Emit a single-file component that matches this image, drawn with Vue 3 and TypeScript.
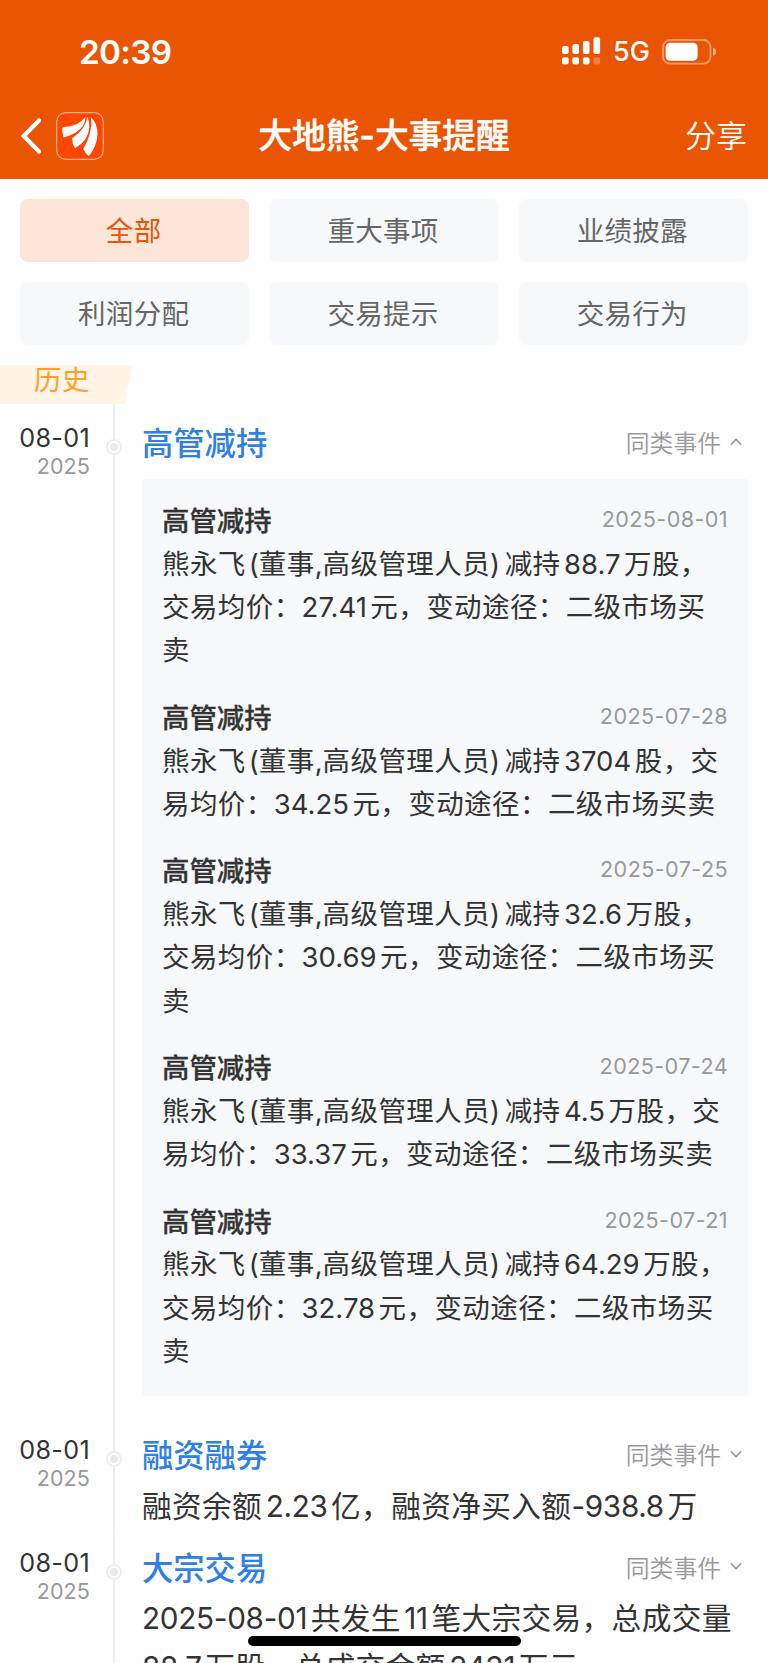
<script setup lang="ts">
interface Run { text: string; kind: string[] }
interface Notice { date: string; lines: string[] }
interface Entry { day: string; year: string; title: string; open: boolean; notices: Notice[]; lines: string[] }

const filters: string[] = ['全部', '重大事项', '业绩披露', '利润分配', '交易提示', '交易行为']

const entries: Entry[] = [
  {
    day: '08-01', year: '2025', title: '高管减持', open: true, lines: [],
    notices: [
      { date: '2025-08-01', lines: ['熊永飞(董事,高级管理人员)减持88.7万股，', '交易均价：27.41元，变动途径：二级市场买', '卖'] },
      { date: '2025-07-28', lines: ['熊永飞(董事,高级管理人员)减持3704股，交', '易均价：34.25元，变动途径：二级市场买卖'] },
      { date: '2025-07-25', lines: ['熊永飞(董事,高级管理人员)减持32.6万股，', '交易均价：30.69元，变动途径：二级市场买', '卖'] },
      { date: '2025-07-24', lines: ['熊永飞(董事,高级管理人员)减持4.5万股，交', '易均价：33.37元，变动途径：二级市场买卖'] },
      { date: '2025-07-21', lines: ['熊永飞(董事,高级管理人员)减持64.29万股，', '交易均价：32.78元，变动途径：二级市场买', '卖'] },
    ],
  },
  { day: '08-01', year: '2025', title: '融资融券', open: false, notices: [], lines: ['融资余额2.23亿，融资净买入额-938.8万'] },
  { day: '08-01', year: '2025', title: '大宗交易', open: false, notices: [], lines: ['2025-08-01共发生11笔大宗交易，总成交量', '88.7万股，总成交金额2431万元'] },
]

// Splits a line so that figures and brackets can carry a little space beside Chinese characters.
function runs(line: string): Run[] {
  const parts = line.match(/[-\d.]+|\(|\)|,|[^-\d.(),]+/g) ?? []
  return parts.map((text, i): Run => {
    if (/\d/.test(text)) {
      const flush = i === 0 || text.startsWith('-') || parts[i - 1].endsWith('：')
      return { text, kind: flush ? ['num', 'flush'] : ['num'] }
    }
    if (text === '(') return { text, kind: ['open'] }
    if (text === ')') return { text, kind: ['close'] }
    if (text === ',') return { text, kind: [] }
    return { text, kind: ['cjk'] }
  })
}
</script>

<template>
  <div class="page">
    <header class="top">
      <div class="status">
        <span class="clock">20:39</span>
        <div class="indicators">
          <svg class="signal" width="40" height="30" viewBox="0 0 40 30" fill="#fff">
            <rect x="0" y="9" width="6.6" height="8" rx="2" />
            <rect x="10.4" y="7" width="6.6" height="10" rx="2" />
            <rect x="20.9" y="4" width="6.6" height="13" rx="2" />
            <rect x="31.5" y="0.3" width="6.6" height="16.7" rx="2" />
            <rect x="0" y="20.3" width="6.6" height="7.3" rx="2" />
            <rect x="10.4" y="20.3" width="6.6" height="7.3" rx="2" />
            <rect x="20.9" y="20.3" width="6.6" height="7.3" rx="2" />
            <rect x="31.5" y="20.3" width="6.6" height="7.3" rx="2" opacity=".25" />
          </svg>
          <span class="network">5G</span>
          <svg class="battery" width="55" height="26" viewBox="0 0 55 26">
            <rect x="1" y="1" width="47.5" height="23.6" rx="7" fill="none" stroke="#fff" stroke-opacity=".42" stroke-width="1.8" />
            <rect x="3.6" y="3.8" width="32" height="18" rx="4.5" fill="#fff" />
            <path d="M51 8.5q3 1.2 3 4.3t-3 4.3z" fill="#fff" fill-opacity=".5" />
          </svg>
        </div>
      </div>
      <div class="nav">
        <div class="nav-left">
          <svg class="back" width="22" height="36" viewBox="0 0 22 36" fill="none" stroke="#fff" stroke-width="4.2" stroke-linecap="round" stroke-linejoin="miter">
            <path d="M18 2.500 2.800 18 18 33.500" />
          </svg>
          <svg class="logo" width="48" height="48" viewBox="0 0 48 48">
            <rect x=".7" y=".7" width="46.600" height="46.600" rx="9" fill="#ff4600" stroke="#ffb38c" stroke-width="1.200" />
            <g fill="#fff">
              <path d="M6.500 15.200 Q23 14.500 29.300 5 Q30 14 19 21 Q13 24 7.500 25.600 Q5.600 20 6.500 15.200Z" />
              <path d="M31.300 4.500 Q30.800 15.500 16 26.500 Q16.200 32 19 36.300 Q32 29 33.300 16 Q33.500 9 31.300 4.500Z" />
              <path d="M34.700 5 Q37.500 18 27.300 37 Q29 41 32.800 44.300 Q41 34 41.500 22 Q41.500 11 34.700 5Z" />
            </g>
          </svg>
        </div>
        <h1>大地熊-大事提醒</h1>
        <span class="share">分享</span>
      </div>
    </header>

    <nav class="filters">
      <span v-for="(f, i) in filters" :key="f" class="filter" :class="{ active: i === 0 }">{{ f }}</span>
    </nav>

    <div class="history"><span>历史</span></div>

    <main class="timeline">
      <section v-for="e in entries" :key="e.title" class="entry">
        <div class="when">
          <span class="day">{{ e.day }}</span>
          <span class="year">{{ e.year }}</span>
        </div>
        <div class="rail"><i class="dot"></i></div>
        <div class="content">
          <div class="head">
            <h2>{{ e.title }}</h2>
            <span class="similar">
              同类事件
              <svg width="12" height="8" viewBox="0 0 12 8" fill="none" stroke="#999" stroke-width="1.700">
                <path :d="e.open ? 'M1 6.500 6 1.500l5 5' : 'M1 1.500l5 5 5-5'" />
              </svg>
            </span>
          </div>
          <div v-if="e.open" class="box">
            <article v-for="n in e.notices" :key="n.date" class="notice">
              <div class="notice-head"><h3>{{ e.title }}</h3><time>{{ n.date }}</time></div>
              <p v-for="l in n.lines" :key="l" class="line"><span v-for="(r, i) in runs(l)" :key="i" :class="r.kind">{{ r.text }}</span></p>
            </article>
          </div>
          <div v-else class="summary">
            <p v-for="l in e.lines" :key="l" class="line"><span v-for="(r, i) in runs(l)" :key="i" :class="r.kind">{{ r.text }}</span></p>
          </div>
        </div>
      </section>
    </main>
    <div class="home-bar"></div>
  </div>
</template>

<style>
body { margin: 0; background: #fefefe; }
</style>

<style scoped>
.page {
  position: relative;
  width: 768px;
  height: 1663px;
  overflow: hidden;
  display: flex;
  flex-direction: column;
  background: #fefefe;
  color: #333;
  font-family: Inter, "Noto Sans CJK SC", sans-serif;
  text-autospace: no-autospace;
  text-spacing-trim: space-all;
}
h1, h2, h3, p { margin: 0; }
.top { flex: none; height: 179px; background: #ea5504; color: #fff; }
.status { height: 93px; padding: 9px 51px 0 79px; display: flex; align-items: center; justify-content: space-between; box-sizing: border-box; }
.clock { font-size: 33.300px; font-weight: 600; letter-spacing: -0.700px; line-height: 40px; padding-top: 2px; }
.indicators { display: flex; align-items: center; padding-top: 1px; }
.signal { margin-right: 11px; }
.network { font-size: 27px; font-weight: 500; line-height: 30px; width: 37px; margin-right: 12px; padding-top: 1px; white-space: nowrap; }
.nav { height: 86px; padding: 0 21px; display: grid; grid-template-columns: 1fr auto 1fr; align-items: center; }
.nav-left { display: flex; align-items: center; }
.back { margin-right: 13px; }
h1 { font-size: 33.700px; font-weight: 500; line-height: 48px; white-space: nowrap; -webkit-text-stroke: 0.500px #fff; }
.share { justify-self: end; font-size: 31px; line-height: 44px; font-weight: 350; }

.filters { flex: none; display: grid; grid-template-columns: repeat(3, 1fr); grid-auto-rows: 63px; gap: 20px; padding: 20px 20px 0; }
.filter { display: flex; align-items: center; justify-content: center; box-sizing: border-box; padding: 0 2px 3px 0; border-radius: 8px; background: #f6f8fa; color: #666; font-size: 27.500px; letter-spacing: 0.300px; }
.filter.active { background: #fce6da; color: #ea5504; }

.history { flex: none; width: 132px; height: 39px; margin-top: 20px; background: #fff4e6; clip-path: polygon(0 0, 100% 0, 124.500px 100%, 0 100%); color: #ffa126; font-size: 27.500px; line-height: 30px; letter-spacing: 0.500px; }
.history span { margin-left: 34px; }

.timeline { flex: none; display: flex; flex-direction: column; }
.entry { display: flex; }
.when { width: 90px; flex: none; display: flex; flex-direction: column; align-items: flex-end; padding-top: 20px; }
.day { font-size: 25.200px; line-height: 29px; letter-spacing: 0.300px; }
.year { font-size: 21.500px; line-height: 26px; color: #999; letter-spacing: 0.100px; }
.rail { width: 16px; flex: none; margin: 0 13px 0 16px; display: flex; justify-content: center; background: linear-gradient(#eee, #eee) center / 2px 100% no-repeat; }
.dot { box-sizing: border-box; width: 16px; height: 16px; flex: none; margin-top: 35px; border-radius: 50%; background: radial-gradient(circle, #eaeaea 3.800px, #fefefe 4.500px); border: 2px solid #eee; }
.content { width: 606px; margin-left: 7px; }
.head { height: 75px; display: flex; align-items: center; justify-content: space-between; padding-right: 6px; box-sizing: border-box; }
h2 { font-size: 31.300px; font-weight: 500; color: #2e7fe6; white-space: nowrap; }
.similar { display: flex; align-items: center; gap: 9px; font-size: 23.800px; font-weight: 350; color: #999; }
.box { background: #f6f8fa; padding: 20px 20px 0; display: flow-root; margin-bottom: 20px; }
.notice { margin-bottom: 23.100px; }
.notice-head { display: flex; justify-content: space-between; align-items: center; height: 44px; box-sizing: border-box; padding-bottom: 3.500px; }
h3 { font-size: 27.400px; font-weight: 500; -webkit-text-stroke: 0.300px #333; }
time { font-size: 21.600px; color: #999; letter-spacing: 0.400px; }
.line { white-space: nowrap; }
.notice .line { font-size: 27.500px; line-height: 43.200px; }
.notice .cjk { letter-spacing: 0.420px; }
.summary { margin: -9.500px 0 -2px; }
.summary .line { font-size: 29.700px; line-height: 49px; }
.summary .cjk { letter-spacing: 0.350px; }
.summary .num { letter-spacing: -0.300px; }
.num { margin: 0 3.500px; }
.num.flush { margin-left: 0; }
.open { margin-left: 3px; }
.close { margin-right: 4.500px; }
.home-bar { position: absolute; left: 248px; top: 1636px; width: 273px; height: 10px; border-radius: 5px; background: #000; }
</style>
